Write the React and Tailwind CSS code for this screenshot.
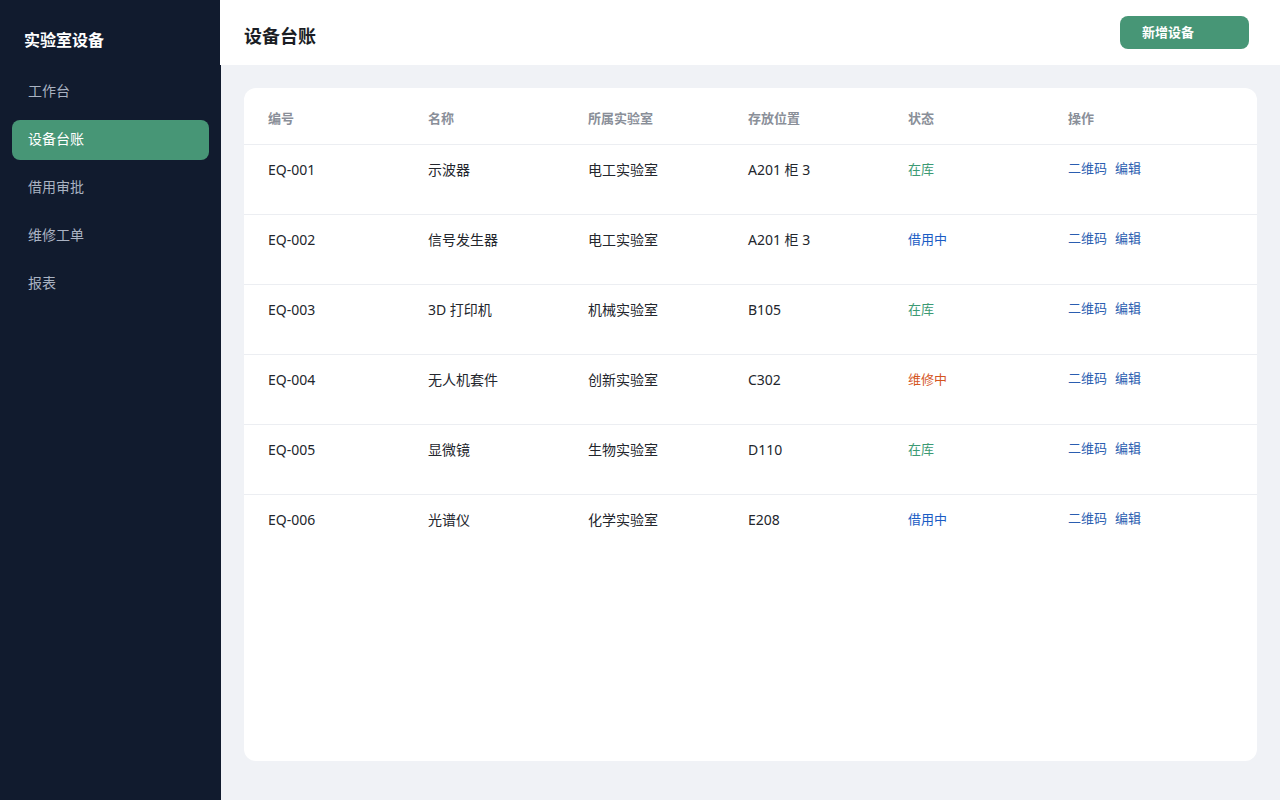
import React from "react";

const navItems = ["工作台", "设备台账", "借用审批", "维修工单", "报表"];

const rows = [
  { id: "EQ-001", name: "示波器", lab: "电工实验室", place: "A201 柜 3", status: "在库" },
  { id: "EQ-002", name: "信号发生器", lab: "电工实验室", place: "A201 柜 3", status: "借用中" },
  { id: "EQ-003", name: "3D 打印机", lab: "机械实验室", place: "B105", status: "在库" },
  { id: "EQ-004", name: "无人机套件", lab: "创新实验室", place: "C302", status: "维修中" },
  { id: "EQ-005", name: "显微镜", lab: "生物实验室", place: "D110", status: "在库" },
  { id: "EQ-006", name: "光谱仪", lab: "化学实验室", place: "E208", status: "借用中" },
];

const statusColor = (status) => {
  if (status === "在库") {
    return "text-[#3d9a74]";
  }
  if (status === "借用中") {
    return "text-[#1a5cc4]";
  }
  return "text-[#d4561f]";
};

function App() {
  return (
    <div
      className="flex h-[800px] w-[1280px] overflow-hidden bg-[#f0f2f6]"
      style={{ fontFamily: '"Noto Sans", "Noto Sans CJK SC", sans-serif' }}
    >
      <aside className="flex w-[221px] shrink-0 flex-col bg-[#111b2e]">
        <div className="px-6 pb-[21px] pt-[29px] text-[16px] font-bold leading-[22px] text-white">
          实验室设备
        </div>
        <nav className="flex flex-col gap-2 px-3">
          {navItems.map((item) => (
            <div
              key={item}
              className={`flex h-[40px] items-center rounded-lg px-4 pb-[3px] text-[14px] ${
                item === "设备台账"
                  ? "bg-[#479676] text-white"
                  : "text-[#a9b2c2]"
              }`}
            >
              {item}
            </div>
          ))}
        </nav>
      </aside>

      <main className="flex flex-1 flex-col">
        <header className="-ml-px flex h-[65px] items-center justify-between bg-white pl-[24px] pr-[31px]">
          <h1 className="pt-[7px] text-[18px] font-bold text-[#1a1d24]">设备台账</h1>
          <button className="h-[33px] w-[129px] rounded-lg bg-[#479676] px-[22px] text-left text-[13px] font-bold text-white">
            新增设备
          </button>
        </header>

        <div className="px-[23px] pt-[23px]">
          <div className="h-[673px] overflow-hidden rounded-xl bg-white">
            <table className="w-full border-collapse text-left">
              <thead>
                <tr className="h-[56px] border-b border-[#eceef2] text-[13px] text-[#8a8f99]">
                  <th className="w-[184px] pl-6 pt-[6px] font-bold">编号</th>
                  <th className="w-[160px] pt-[6px] font-bold">名称</th>
                  <th className="w-[160px] pt-[6px] font-bold">所属实验室</th>
                  <th className="w-[160px] pt-[6px] font-bold">存放位置</th>
                  <th className="w-[160px] pt-[6px] font-bold">状态</th>
                  <th className="pt-[6px] font-bold">操作</th>
                </tr>
              </thead>
              <tbody>
                {rows.map((row, i) => (
                  <tr
                    key={row.id}
                    className={`h-[70px] align-top ${
                      i < rows.length - 1 ? "border-b border-[#eceef2]" : ""
                    }`}
                  >
                    <td className="pl-6 pt-[14px] text-[14px] text-[#23262d]">{row.id}</td>
                    <td className="pt-[14px] text-[14px] text-[#23262d]">{row.name}</td>
                    <td className="pt-[14px] text-[14px] text-[#23262d]">{row.lab}</td>
                    <td className="pt-[14px] text-[14px] text-[#23262d]">{row.place}</td>
                    <td className={`pt-[15px] text-[13px] ${statusColor(row.status)}`}>
                      {row.status}
                    </td>
                    <td className="pt-[14px] text-[13px] text-[#2a5db0]">
                      <span className="mr-2">二维码</span>
                      <span>编辑</span>
                    </td>
                  </tr>
                ))}
              </tbody>
            </table>
          </div>
        </div>
      </main>
    </div>
  );
}

export default App;
